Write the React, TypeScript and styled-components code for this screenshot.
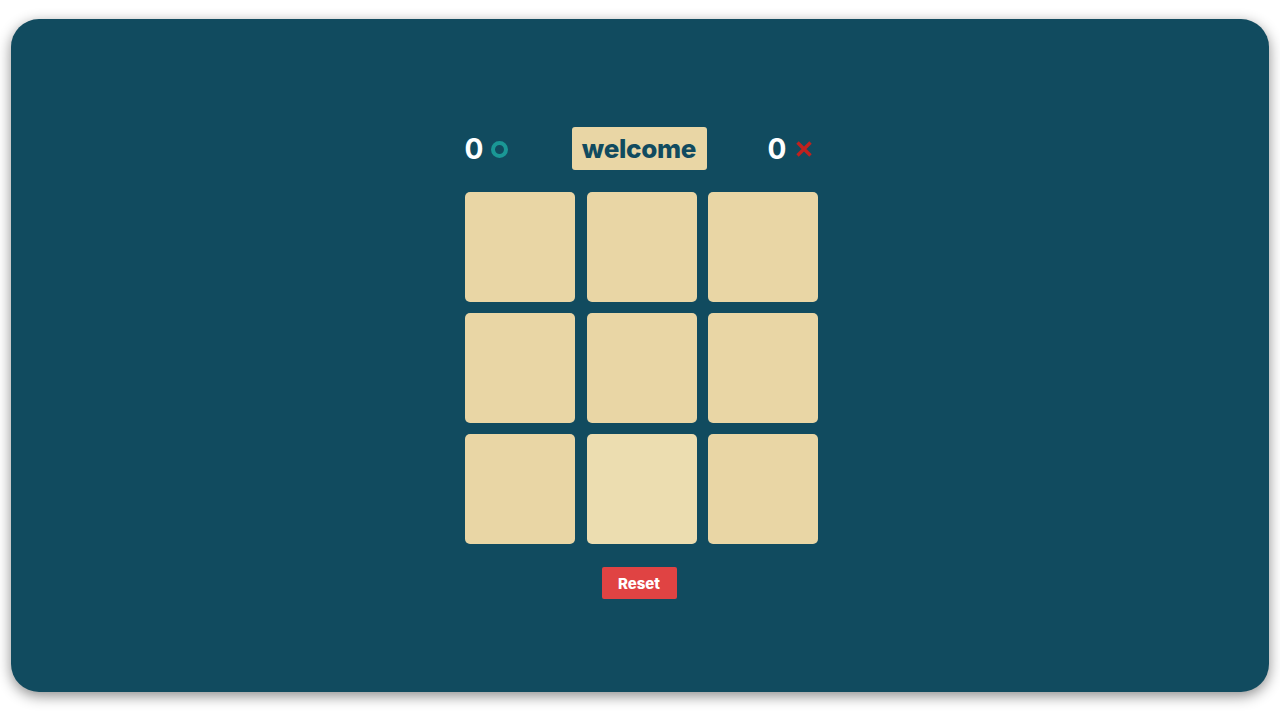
import React from "react";
import styled, { createGlobalStyle } from "styled-components";

const Global = createGlobalStyle`
  html, body { margin: 0; padding: 0; background: #ffffff; }
  body { font-family: "Open Sans", "Liberation Sans", sans-serif; }
  * { box-sizing: border-box; }
`;

const Page = styled.div`
  width: 1280px;
  height: 720px;
  padding: 19px 11px 28px 11px;
  display: flex;
`;

const Panel = styled.div`
  flex: 1;
  background: #114b5f;
  border-radius: 28px;
  box-shadow: 0 4px 14px rgba(0, 0, 0, 0.45);
  display: flex;
  flex-direction: column;
  align-items: center;
  padding-top: 108px;
`;

const Header = styled.div`
  width: 354px;
  height: 43px;
  display: grid;
  grid-template-columns: 1fr auto 1fr;
  align-items: center;
  margin-left: 3px;
`;

const Score = styled.div<{ $align: "start" | "end" }>`
  display: flex;
  align-items: center;
  gap: 9px;
  justify-self: ${(p) => p.$align};
  padding-right: ${(p) => (p.$align === "end" ? "7px" : "0")};
  color: #ffffff;
  font-family: "Inter", "Liberation Sans", sans-serif;
  font-weight: 700;
  font-size: 28px;
  line-height: 1;
`;

const Ring = styled.span`
  width: 17px;
  height: 17px;
  border-radius: 50%;
  border: 4.5px solid #1a9795;
  display: inline-block;
  margin-top: 1px;
  margin-left: -1px;
`;

const Welcome = styled.div`
  background: #e9d6a5;
  color: #114b5f;
  border-radius: 3px;
  height: 43px;
  width: 135px;
  display: flex;
  align-items: center;
  justify-content: center;
  font-family: "Inter", "Liberation Sans", sans-serif;
  font-weight: 800;
  font-size: 26px;
  letter-spacing: -0.3px;
  margin-left: -5px;
`;

const Board = styled.div`
  margin-top: 22px;
  margin-left: 3px;
  display: grid;
  grid-template-columns: repeat(3, 110px);
  grid-auto-rows: 110px;
  column-gap: 11.5px;
  row-gap: 11px;
`;

const Cell = styled.div<{ $hover?: boolean }>`
  background: ${(p) => (p.$hover ? "#ecddb0" : "#e9d6a5")};
  border-radius: 5px;
`;

const ResetButton = styled.button`
  margin-top: 23px;
  margin-right: 2px;
  width: 75px;
  height: 32px;
  border: none;
  border-radius: 2px;
  background: #e04343;
  color: #ffffff;
  font-family: "Inter", "Liberation Sans", sans-serif;
  font-weight: 800;
  font-size: 15px;
  padding: 0;
`;

const Cross = () => (
  <svg width="16" height="16" viewBox="0 0 16 16" style={{ marginTop: 1 }}>
    <path d="M1.5 1.5 L14.5 14.5 M14.5 1.5 L1.5 14.5" stroke="#c0211e" strokeWidth="3.4" strokeLinecap="butt" />
  </svg>
);

export default function App() {
  const cells = Array.from({ length: 9 }, (_, i) => i);
  return (
    <>
      <Global />
      <Page>
        <Panel>
          <Header>
            <Score $align="start">
              <span>0</span>
              <Ring />
            </Score>
            <Welcome>welcome</Welcome>
            <Score $align="end">
              <span>0</span>
              <Cross />
            </Score>
          </Header>
          <Board>
            {cells.map((i) => (
              <Cell key={i} $hover={i === 7} />
            ))}
          </Board>
          <ResetButton>Reset</ResetButton>
        </Panel>
      </Page>
    </>
  );
}
